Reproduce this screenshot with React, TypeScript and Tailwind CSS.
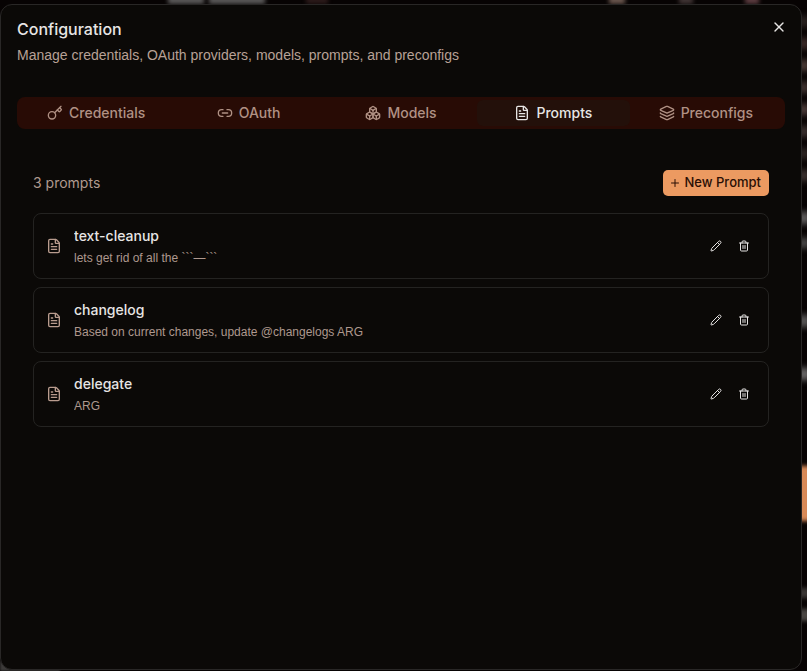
import React, { useState } from 'react';
import { Boxes, FileText, Key, Layers, Link2, Pencil, Plus, Trash2, X } from 'lucide-react';
import type { LucideIcon } from 'lucide-react';
import { clsx } from 'clsx';

interface Prompt {
  name: string;
  body: string;
}

interface TabItem {
  id: string;
  label: string;
  icon: LucideIcon;
}

const TABS: TabItem[] = [
  { id: 'credentials', label: 'Credentials', icon: Key },
  { id: 'oauth', label: 'OAuth', icon: Link2 },
  { id: 'models', label: 'Models', icon: Boxes },
  { id: 'prompts', label: 'Prompts', icon: FileText },
  { id: 'preconfigs', label: 'Preconfigs', icon: Layers }
];

const PROMPTS: Prompt[] = [
  { name: 'text-cleanup', body: 'lets get rid of all the ```—```' },
  { name: 'changelog', body: 'Based on current changes, update @changelogs ARG' },
  { name: 'delegate', body: 'ARG' }
];

// Blurred leftovers of the app that sits behind the dialog
const Backdrop: React.FC = () => (
  <div aria-hidden="true" className="absolute inset-0 overflow-hidden bg-[#070303]">
    <div className="absolute -top-1 left-[168px] h-2 w-[36px] bg-[#5a5858] blur-[2px]" />
    <div className="absolute -top-1 left-[209px] h-2 w-[56px] bg-[#5a5858] blur-[2px]" />
    <div className="absolute -top-1 left-[306px] h-2 w-[22px] bg-[#2c1a1a] blur-[2px]" />
    <div className="absolute -top-1 left-[609px] h-2 w-[16px] bg-[#6a564e] blur-[2px]" />
    <div className="absolute -top-1 left-[679px] h-2 w-[14px] bg-[#403434] blur-[2px]" />
    <div className="absolute -top-1 left-[745px] h-2 w-[14px] bg-[#5c3c40] blur-[2px]" />
    <div className="absolute top-[16px] -right-1 flex w-[14px] flex-col gap-[11px] blur-[3px]">
      <div className="h-[11px] bg-[#2a2220]" />
      <div className="h-[11px] bg-[#3a2a28]" />
      <div className="h-[11px] bg-[#4a3a36]" />
      <div className="h-[11px] bg-[#3f322f]" />
      <div className="h-[11px] bg-[#4a3a38]" />
      <div className="h-[11px] bg-[#3a302e]" />
      <div className="h-[11px] bg-[#2c2422]" />
      <div className="h-[11px] bg-[#3c3230]" />
    </div>
    <div className="absolute top-[212px] -right-1 h-[12px] w-[14px] bg-[#5e5c5c] blur-[3px]" />
    <div className="absolute top-[238px] -right-1 h-[10px] w-[14px] bg-[#4a4848] blur-[3px]" />
    <div className="absolute top-[315px] -right-1 h-[12px] w-[14px] bg-[#5a5858] blur-[3px]" />
    <div className="absolute top-[368px] -right-1 h-[12px] w-[14px] bg-[#6a6868] blur-[3px]" />
    <div className="absolute top-[466px] -right-1 h-[55px] w-[14px] bg-[#d88a58] blur-[2px]" />
    <div className="absolute top-[588px] -right-1 h-[10px] w-[14px] bg-[#3a3634] blur-[2px]" />
    <div className="absolute top-[609px] -right-1 h-[12px] w-[14px] bg-[#4a4643] blur-[2px]" />
    <div className="absolute bottom-0 left-0 h-[10px] w-[60px] bg-[#3c3a39] blur-[1px]" />
  </div>
);

interface PromptCardProps {
  prompt: Prompt;
}

const PromptCard: React.FC<PromptCardProps> = ({ prompt }) => (
  <li className="flex items-center gap-3 rounded-lg border border-[#242321] p-3">
    <FileText className="size-4 shrink-0 text-[#b99c8e]" />
    <div className="min-w-0 flex-1">
      <h3 className="truncate text-sm font-medium text-[#e7e5e4]">{prompt.name}</h3>
      <p className="mt-1 truncate font-['Liberation_Sans',sans-serif] text-xs text-[#ae988e]">
        {prompt.body}
      </p>
    </div>
    <div className="flex items-center gap-1">
      <button
        type="button"
        aria-label={`Edit ${prompt.name}`}
        className="flex size-6 items-center justify-center rounded-md text-[#e7e5e4]"
      >
        <Pencil className="size-3" />
      </button>
      <button
        type="button"
        aria-label={`Delete ${prompt.name}`}
        className="flex size-6 items-center justify-center rounded-md text-[#e7e5e4]"
      >
        <Trash2 className="size-3" />
      </button>
    </div>
  </li>
);

const App: React.FC = () => {
  const [activeTab, setActiveTab] = useState('prompts');

  return (
    <div className="relative flex min-h-screen pt-1 pr-[5px] pb-px font-['Inter',sans-serif]">
      <Backdrop />
      <section
        role="dialog"
        aria-labelledby="dialog-title"
        className="relative flex flex-1 flex-col rounded-xl border border-[#292726] bg-[#0b0907] p-4"
      >
        <header className="flex items-start justify-between">
          <div>
            <h1 id="dialog-title" className="text-base leading-4 font-medium text-[#e7e5e4]">
              Configuration
            </h1>
            <p className="mt-2 font-['Liberation_Sans',sans-serif] text-sm text-[#b8a196]">
              Manage credentials, OAuth providers, models, prompts, and preconfigs
            </p>
          </div>
          <button
            type="button"
            aria-label="Close"
            className="-m-1.5 flex size-6 items-center justify-center text-[#e7e5e4]"
          >
            <X className="size-4" />
          </button>
        </header>

        <div role="tablist" className="mt-8 flex h-8 rounded-lg bg-[#280b05] p-[3px]">
          {TABS.map(({ id, label, icon: Icon }) => (
            <button
              key={id}
              type="button"
              role="tab"
              aria-selected={activeTab === id}
              onClick={() => setActiveTab(id)}
              className={clsx(
                'flex flex-1 items-center justify-center gap-1.5 rounded-md text-sm font-medium',
                activeTab === id ? 'bg-[#23100a] text-[#e7e5e4]' : 'text-[#b09184]'
              )}
            >
              <Icon className="size-4" />
              {label}
            </button>
          ))}
        </div>

        <div role="tabpanel" className="mt-6 flex-1 p-4">
          <div className="flex h-7 items-center justify-between">
            <p className="text-sm text-[#b09a8f]">{PROMPTS.length} prompts</p>
            <button
              type="button"
              className="flex h-[26px] items-center gap-1 rounded-[5px] bg-[#ec9a61] pr-2 pl-1.5 text-[13px] font-medium text-[#2a0f05]"
            >
              <Plus className="size-3" />
              New Prompt
            </button>
          </div>

          <ul className="mt-4 space-y-2">
            {PROMPTS.map(prompt => (
              <PromptCard key={prompt.name} prompt={prompt} />
            ))}
          </ul>
        </div>
      </section>
    </div>
  );
};

export default App;
